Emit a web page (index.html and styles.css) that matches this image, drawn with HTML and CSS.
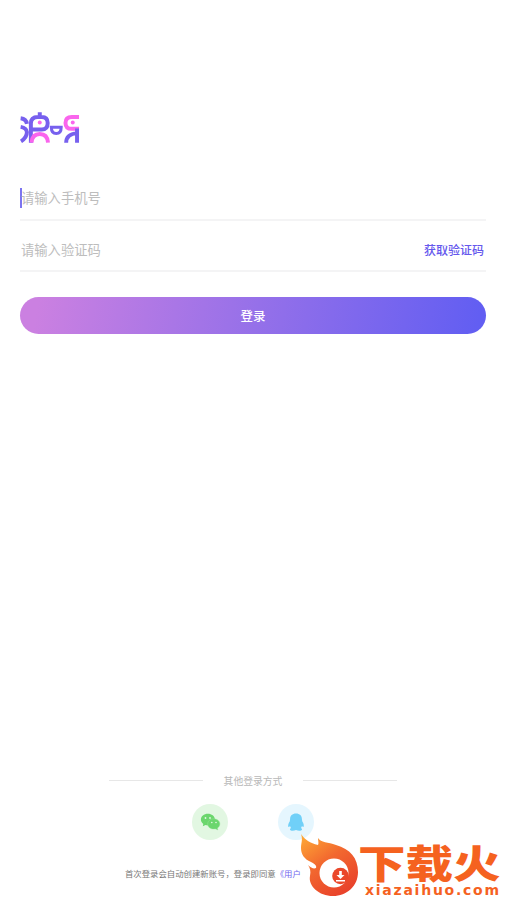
FILE: index.html
```html
<!DOCTYPE html>
<html lang="zh-CN">
<head>
<meta charset="utf-8">
<title>登录</title>
<link rel="stylesheet" href="styles.css">
</head>
<body>
<main class="screen">
  <svg class="logo" viewBox="30 20 180 94" fill="none" stroke="#7760ee" stroke-width="12">
    <path d="M31 39Q48 41 50 56M31 65Q49 68 50 81Q50 98 32 109"/>
    <path d="M62 113V55Q62 35 83 35H95Q113 35 113 53Q113 73 95 73H67M89 33V21"/>
    <path d="M64 113Q66 87 89 87Q112 87 114 113" stroke="#fa65ed"/>
    <path d="M124 66H154Q154 85 139 85Q124 85 124 66Z" stroke-width="9"/>
    <path d="M208 35H186Q167 35 167 53Q167 71 186 71H208" stroke="#fa65ed"/>
    <path d="M169 113Q169 87 202 84M202 70V113"/>
    <circle cx="89" cy="52" r="6" fill="#fa65ed" stroke="none"/>
    <circle cx="189" cy="52" r="6" fill="#fa65ed" stroke="none"/>
  </svg>
  <form class="form">
    <div class="field phone"><i class="caret"></i><span>请输入手机号</span></div>
    <div class="field code"><span>请输入验证码</span><a class="get-code">获取验证码</a></div>
    <button class="submit" type="button">登录</button>
  </form>
  <footer class="footer">
    <div class="divider"><span>其他登录方式</span></div>
    <div class="socials">
      <div class="social wechat">
        <svg viewBox="0 0 36 36">
          <path fill="#6bd66d" d="M16 9.700C11.800 9.700 8.900 12.300 8.900 15.600C8.900 17.600 9.900 19 11.300 20L10.800 22.300L13.500 21Q15 21.500 16.800 21.400C22 21 23.100 17.800 22.900 15.200C22.600 12 19.600 9.700 16 9.700Z"/>
          <path fill="#6bd66d" stroke="#a5e6a5" stroke-width=".4" d="M21.700 14.800C18 14.800 15.700 17 15.700 20C15.700 23 18.400 25.100 21.700 25.100L23.500 24.900L26 26L25.500 24.100C27 23 27.900 21.600 27.900 19.900C27.900 17 25 14.800 21.700 14.800Z"/>
          <g fill="#e2f7e2"><circle cx="13.500" cy="14" r=".9"/><circle cx="18" cy="14" r=".9"/><circle cx="19.800" cy="18.500" r=".8"/><circle cx="24" cy="18.500" r=".8"/></g>
        </svg>
      </div>
      <div class="social qq">
        <svg viewBox="0 0 36 36">
          <path fill="#70d0f8" d="M18 9.500C14.300 9.500 12.100 11.800 12.100 14.900L11.800 17.200C10.400 19 9.900 21.300 10.300 22.800C10.600 23.500 11.500 22.800 12 22L13 24C11.400 24.700 11.600 26.500 13.600 26.700Q16 27 18 26Q20 27 22.400 26.700C24.400 26.500 24.600 24.700 23 24L24 22C24.700 23 25.500 23.400 25.700 22.600C26 21 25.600 19 24.200 17.200L23.900 14.900C23.900 11.800 21.700 9.500 18 9.500Z"/>
        </svg>
      </div>
    </div>
    <p class="terms">首次登录会自动创建新账号，登录即同意<b>《用户</b></p>
  </footer>
  <aside class="brand">
    <svg class="flame" viewBox="0 0 59 63">
      <defs><linearGradient id="fire" x1="0" y1="0" x2=".65" y2="1"><stop offset="0" stop-color="#ffad36"/><stop offset=".5" stop-color="#f2682f"/><stop offset="1" stop-color="#e9432b"/></linearGradient></defs>
      <path fill="url(#fire)" d="M0 0C4 6 9 9 17 11C18 9 17 7 17 4C20 9 27 8 35 11C49 15 57 24 57 38C57 52 46 62 32 62C18 62 7 52 9 42C10 37 9 34 7 31C10 34 13 35 15 34C16 32 14 30 10 28C3 25 0 20 0 14C0 9 2 6 0 0Z"/>
      <circle cx="33" cy="39" r="14.500" fill="#fff"/>
      <circle cx="39.500" cy="42" r="8.300" fill="#ea482b"/>
      <path fill="#fff" d="M38.200 37H40.800V41H43.500L39.500 45L35.500 41H38.200ZM35 46H44V47.500H35Z"/>
    </svg>
    <div class="brand-text"><strong>下载火</strong><span>xiazaihuo.com</span></div>
  </aside>
</main>
</body>
</html>
```
FILE: styles.css
```css
* { box-sizing: border-box; }
body { margin: 0; background: #fff; font-family: "Noto Sans CJK SC", sans-serif; }
.screen { position: relative; width: 506px; height: 900px; padding: 112px 20px 0; display: flex; flex-direction: column; overflow: hidden; }
.logo { width: 60px; height: 31px; flex: none; }
.form { margin-top: 36px; }
.field { display: flex; align-items: center; width: 466px; color: #bdbdbd; font-size: 13.300px; line-height: 20px; border-bottom: 2px solid #f4f4f5; }
.phone { height: 42px; padding-bottom: 2px; }
.code { height: 51px; padding-top: 8px; justify-content: space-between; }
.caret { width: 2px; height: 20px; margin-right: -2px; background: #7c74f0; }
.field span { padding-left: 1px; }
.get-code { color: #6558ed; font-size: 12px; font-weight: 500; padding-right: 2px; }
.submit { display: block; width: 466px; height: 37px; margin-top: 25px; padding: 0; border: 0; border-radius: 19px; background: linear-gradient(100deg, #cb80e1 4%, #9570e9 51%, #625ef2 98%); color: #fff; font: 500 12.500px/18px "Noto Sans CJK SC", sans-serif; }
.footer { margin-top: auto; height: 128px; }
.divider { display: flex; align-items: center; justify-content: space-between; width: 288px; height: 16px; margin-left: 89px; color: #b8b8b8; font-size: 9.800px; }
.divider::before, .divider::after { content: ""; width: 94px; height: 1px; background: #e7e7e7; }
.divider span { padding-top: 2px; }
.socials { display: flex; gap: 50px; margin: 16px 0 0 172px; }
.social { width: 36px; height: 36px; border-radius: 50%; }
.social svg { display: block; width: 36px; height: 36px; }
.wechat { background: #e2f7e2; }
.qq { background: #e5f6fe; }
.terms { margin: 25px 0 0 105px; color: #777; font-size: 8.400px; line-height: 16px; white-space: nowrap; }
.terms b { color: #7068ef; font-weight: 400; }
.brand { position: absolute; left: 301px; top: 834px; display: flex; width: 205px; height: 64px; color: #f5621f; }
.flame { width: 59px; height: 63px; flex: none; }
.brand-text { display: flex; flex-direction: column; padding-top: 11px; }
.brand strong { height: 40px; font-size: 47.500px; line-height: 40px; font-weight: 900; white-space: nowrap; margin-left: -2px; transform: scaleY(.82); transform-origin: 0 0; }
.brand span { margin: -2px 0 0 5px; font: 700 14px/14px "DejaVu Sans", sans-serif; letter-spacing: 1.750px; white-space: nowrap; }
```
